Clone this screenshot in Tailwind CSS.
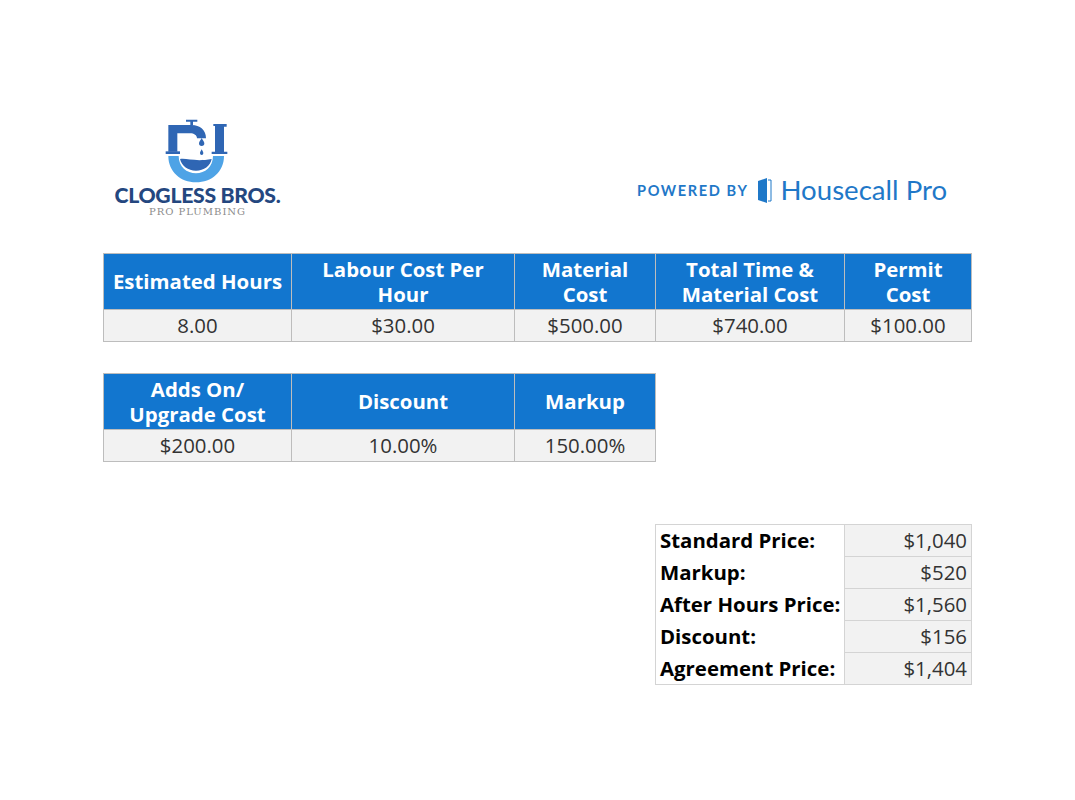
<!DOCTYPE html>
<html lang="en">
<head>
    <meta charset="UTF-8">
    <title>Agreement Price</title>
    <script src="https://cdn.jsdelivr.net/npm/@tailwindcss/browser@4"></script>
</head>
<body class="bg-white font-['Open_Sans',sans-serif]">
<div class="w-[1075px] h-[800px] pl-[103px] pt-[118px] overflow-hidden">

    <!-- Logos -->
    <div class="flex h-[135px] w-[868px]">
        <div class="w-[188px] flex flex-col items-center">
            <svg class="ml-[-1px]" width="64" height="65" viewBox="195 24 192 195">
                <path d="M205 45H275C300 45 318 60 318 85H291C291 76 282 70 270 70H232V125H205Z" fill="#2f66b4"/>
                <path d="M197 124H240V132H197Z" fill="#2f66b4"/>
                <path d="M258 29H292V35H279V46H271V35H258Z" fill="#2f66b4"/>
                <path d="M345 48H340V42H380V50H372V125H382V132H335V125H345Z" fill="#2f66b4"/>
                <path d="M305 84C309 92 313 95 313 100A8 8 0 0 1 297 100C297 95 301 92 305 84Z" fill="#2f66b4"/>
                <path d="M305 118C308 123 310 126 310 130A5 5 0 0 1 300 130C300 126 302 123 305 118Z" fill="#2f66b4"/>
                <path d="M205 138H236C236 170 260 190 288 190C315 190 339 170 339 138H372C372 185 335 217 288 217C242 217 205 185 205 138Z" fill="#4ea3e6"/>
                <path d="M240 147C262 144 285 156 335 147C331 168 312 182 288 182C264 182 245 168 240 147Z" fill="#2f66b4"/>
            </svg>
            <div class="ml-[1px] mt-[2px] text-[21.2px] leading-[20px] font-black tracking-[-0.3px] text-[#24477f] font-['Lato',sans-serif] whitespace-nowrap">CLOGLESS BROS.</div>
            <div class="ml-[1px] mt-[1px] text-[10px] leading-[12px] tracking-[1px] text-[#8c8c8c] font-['DejaVu_Serif',serif] whitespace-nowrap">PRO PLUMBING</div>
        </div>
        <div class="ml-[346px] mt-[56px] flex items-center h-[32px] text-[#1f78c8] whitespace-nowrap">
            <span class="pt-[1px] text-[14.6px] font-bold tracking-[1.6px] font-['Lato',sans-serif]">POWERED BY</span>
            <svg class="ml-[9px]" width="15" height="27" viewBox="0 0 15 27">
                <path d="M1 4l9-3v25l-9-3z" fill="#1f78c8"/>
                <path d="M11 3h3v21h-3" fill="none" stroke="#1f78c8" stroke-width="1"/>
            </svg>
            <span class="ml-[8px] text-[27.6px] leading-[32px] font-['Lato',sans-serif]">Housecall Pro</span>
        </div>
    </div>

    <!-- Cost table -->
    <table class="table-fixed border-collapse w-[868px] text-center">
        <colgroup>
            <col class="w-[188px]"><col class="w-[223px]"><col class="w-[141px]"><col class="w-[189px]"><col class="w-[127px]">
        </colgroup>
        <thead>
            <tr class="h-[56px] bg-[#1276cf] text-white text-[20.4px] leading-[25px] font-bold">
                <th class="border border-[#bdbdbd] p-0 whitespace-nowrap">Estimated Hours</th>
                <th class="border border-[#bdbdbd] px-6">Labour Cost Per Hour</th>
                <th class="border border-[#bdbdbd] px-4">Material Cost</th>
                <th class="border border-[#bdbdbd] px-2">Total Time &amp; Material Cost</th>
                <th class="border border-[#bdbdbd] px-6">Permit Cost</th>
            </tr>
        </thead>
        <tbody>
            <tr class="h-[32px] bg-[#f2f2f2] text-[#333] text-[20.4px] leading-[25px]">
                <td class="border border-[#bdbdbd] p-0">8.00</td>
                <td class="border border-[#bdbdbd] p-0">$30.00</td>
                <td class="border border-[#bdbdbd] p-0">$500.00</td>
                <td class="border border-[#bdbdbd] p-0">$740.00</td>
                <td class="border border-[#bdbdbd] p-0">$100.00</td>
            </tr>
        </tbody>
    </table>

    <!-- Adjustments table -->
    <table class="table-fixed border-collapse w-[552px] mt-[31px] text-center">
        <colgroup>
            <col class="w-[188px]"><col class="w-[223px]"><col class="w-[141px]">
        </colgroup>
        <thead>
            <tr class="h-[56px] bg-[#1276cf] text-white text-[20.4px] leading-[25px] font-bold">
                <th class="border border-[#bdbdbd] px-3">Adds On/ Upgrade Cost</th>
                <th class="border border-[#bdbdbd] p-0">Discount</th>
                <th class="border border-[#bdbdbd] p-0">Markup</th>
            </tr>
        </thead>
        <tbody>
            <tr class="h-[32px] bg-[#f2f2f2] text-[#333] text-[20.4px] leading-[25px]">
                <td class="border border-[#bdbdbd] p-0">$200.00</td>
                <td class="border border-[#bdbdbd] p-0">10.00%</td>
                <td class="border border-[#bdbdbd] p-0">150.00%</td>
            </tr>
        </tbody>
    </table>

    <!-- Price summary -->
    <table class="table-fixed border-collapse w-[316px] ml-[552px] mt-[62px] text-[20.4px] leading-[25px]">
        <colgroup>
            <col class="w-[189px]"><col class="w-[127px]">
        </colgroup>
        <tbody>
            <tr class="h-[32px]">
                <td class="border-x border-t border-[#d4d4d4] pl-[4px] font-bold text-black whitespace-nowrap p-0">Standard Price:</td>
                <td class="border border-[#d4d4d4] bg-[#f2f2f2] text-right pr-[4px] text-[#333]">$1,040</td>
            </tr>
            <tr class="h-[32px]">
                <td class="border-x border-[#d4d4d4] pl-[4px] font-bold text-black whitespace-nowrap p-0">Markup:</td>
                <td class="border border-[#d4d4d4] bg-[#f2f2f2] text-right pr-[4px] text-[#333]">$520</td>
            </tr>
            <tr class="h-[32px]">
                <td class="border-x border-[#d4d4d4] pl-[4px] font-bold text-black whitespace-nowrap p-0">After Hours Price:</td>
                <td class="border border-[#d4d4d4] bg-[#f2f2f2] text-right pr-[4px] text-[#333]">$1,560</td>
            </tr>
            <tr class="h-[32px]">
                <td class="border-x border-[#d4d4d4] pl-[4px] font-bold text-black whitespace-nowrap p-0">Discount:</td>
                <td class="border border-[#d4d4d4] bg-[#f2f2f2] text-right pr-[4px] text-[#333]">$156</td>
            </tr>
            <tr class="h-[32px]">
                <td class="border-x border-b border-[#d4d4d4] pl-[4px] font-bold text-black whitespace-nowrap p-0">Agreement Price:</td>
                <td class="border border-[#d4d4d4] bg-[#f2f2f2] text-right pr-[4px] text-[#333]">$1,404</td>
            </tr>
        </tbody>
    </table>
</div>
</body>
</html>
